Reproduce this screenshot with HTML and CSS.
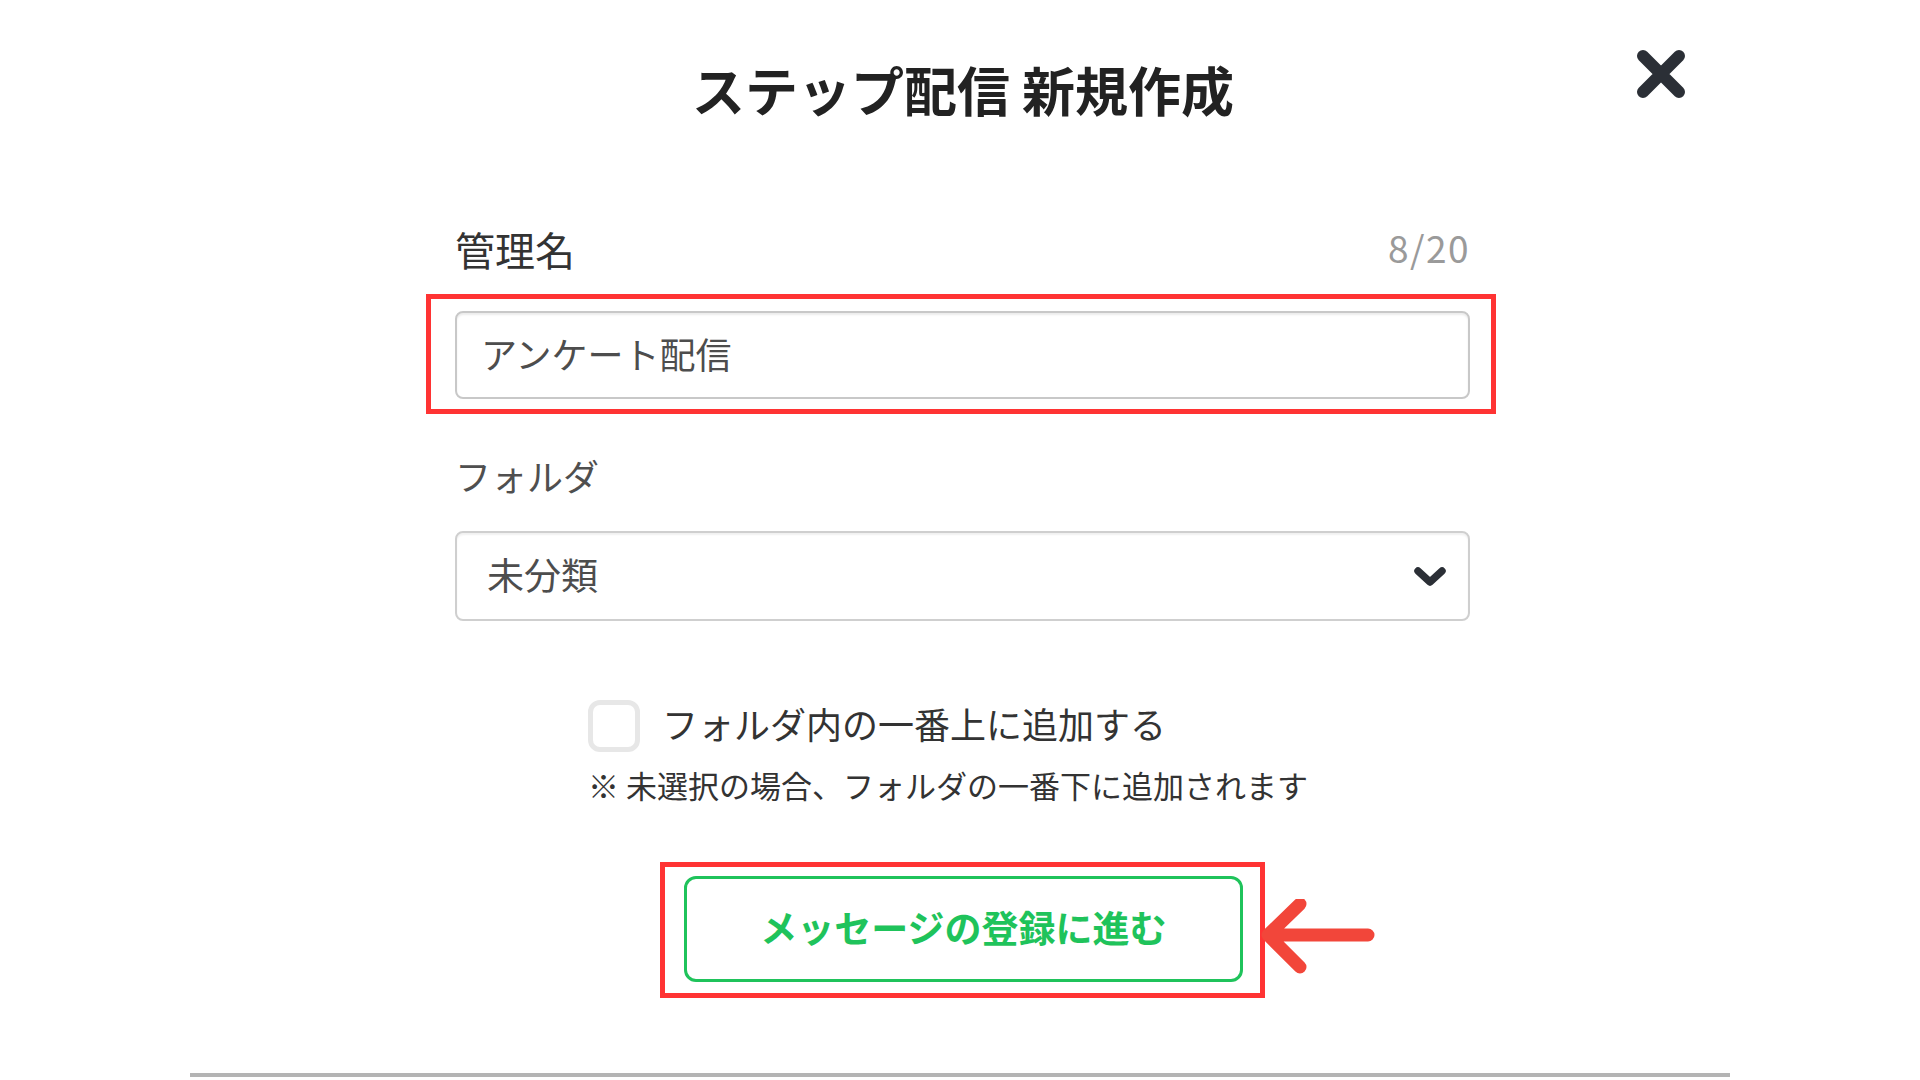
FILE: index.html
```html
<!DOCTYPE html>
<html lang="ja">
<head>
<meta charset="utf-8">
<title>ステップ配信 新規作成</title>
<link rel="stylesheet" href="styles.css">
</head>
<body>
<div class="frame">
  <header class="header">
    <div class="spacer"></div>
    <h1 class="title">ステップ配信 新規作成</h1>
    <button class="close" aria-label="閉じる">
      <svg width="50" height="50" viewBox="0 0 50 50"><path d="M7 7 L43 43 M43 7 L7 43" stroke="#2b2f36" stroke-width="12" stroke-linecap="round" fill="none"/></svg>
    </button>
  </header>

  <main class="form">
    <div class="label-row">
      <span class="label label-main">管理名</span>
      <span class="counter">8/20</span>
    </div>
    <div class="mark mark-input">
      <input class="text-input" type="text" value="アンケート配信">
    </div>

    <div class="label-row label-row-folder">
      <span class="label label-sub">フォルダ</span>
    </div>
    <div class="select">
      <span class="select-value">未分類</span>
      <svg class="chevron" width="34" height="20" viewBox="0 0 34 20"><path d="M5 4 L17 15 L29 4" stroke="#2b2f36" stroke-width="7.5" stroke-linecap="round" stroke-linejoin="round" fill="none"/></svg>
    </div>

    <div class="check-group">
      <label class="check-row">
        <span class="checkbox"></span>
        <span class="check-text">フォルダ内の一番上に追加する</span>
      </label>
      <p class="note">※ 未選択の場合、フォルダの一番下に追加されます</p>
    </div>

    <div class="mark mark-button">
      <button class="next-btn">メッセージの登録に進む</button>
      <svg class="arrow" width="116" height="80" viewBox="0 0 116 80"><path d="M108 36 L8 36 M8 36 L40 5 M8 36 L40 68" stroke="#f2463a" stroke-width="13" stroke-linecap="round" stroke-linejoin="round" fill="none"/></svg>
    </div>
  </main>
</div>
</body>
</html>
```

FILE: styles.css
```css
* { box-sizing: border-box; }
html, body {
  margin: 0;
  padding: 0;
  background: #ffffff;
  overflow: hidden;
}
body {
  font-family: "Noto Sans CJK JP", "Noto Sans", sans-serif;
  color: #333333;
}
.frame {
  width: 1540px;
  height: 1077px;
  margin-left: 190px;
  border-bottom: 4px solid #b4b4b4;
  position: relative;
}
.header {
  display: grid;
  grid-template-columns: 1fr auto 1fr;
  align-items: start;
  padding-top: 49px;
}
.title {
  margin: 10px 0 0 0;
  font-size: 53px;
  line-height: 60px;
  font-weight: 700;
  color: #222222;
  letter-spacing: 0;
  transform: translateX(3px);
}
.close {
  justify-self: end;
  margin-right: 44px;
  padding: 0;
  border: 0;
  background: none;
  width: 50px;
  height: 50px;
  display: block;
}
.close svg { display: block; }

.form {
  width: 1015px;
  margin-left: 265px;
  display: flex;
  flex-direction: column;
}
.label-row {
  display: flex;
  justify-content: space-between;
  align-items: flex-start;
  margin-top: 102px;
}
.label {
  color: #333333;
}
.label-main {
  font-size: 40px;
  line-height: 56px;
}
.counter {
  font-size: 37px;
  line-height: 52px;
  color: #9a9a9a;
  letter-spacing: 1.5px;
}
.mark {
  border: 5px solid #ff3333;
}
.mark-input {
  margin: 17px -26px 0 -29px;
  padding: 12px 21px 10px 24px;
}
.text-input {
  display: block;
  width: 100%;
  height: 88px;
  border: 2px solid #c8c8c8;
  border-radius: 8px;
  box-shadow: inset 0 2px 2px rgba(0,0,0,0.08);
  padding: 0 24px 4px 24px;
  font-family: "Noto Sans CJK JP", sans-serif;
  font-size: 36px;
  color: #4d4d4d;
  background: #ffffff;
  outline: none;
}
.label-row-folder {
  margin-top: 36px;
}
.label-sub {
  font-size: 36px;
  line-height: 50px;
  color: #4f4f4f;
}
.select {
  margin-top: 31px;
  height: 90px;
  border: 2px solid #cfcfcf;
  border-radius: 8px;
  box-shadow: inset 0 2px 2px rgba(0,0,0,0.06);
  display: flex;
  align-items: center;
  justify-content: space-between;
  padding: 0 21px 0 30px;
}
.select-value {
  font-size: 37px;
  color: #4d4d4d;
  padding-bottom: 4px;
}
.chevron { display: block; margin-top: 2px; }

.check-group {
  margin-top: 79px;
  padding-left: 133px;
}
.check-row {
  display: flex;
  align-items: center;
  gap: 22px;
  height: 52px;
}
.checkbox {
  width: 52px;
  height: 52px;
  border: 5px solid #e7e7e7;
  border-radius: 12px;
  background: #ffffff;
  flex: none;
}
.check-text {
  font-size: 36px;
  line-height: 52px;
  margin-top: -6px;
  color: #333333;
}
.note {
  margin: 13px 0 0 0;
  font-size: 31px;
  line-height: 40px;
  color: #333333;
}
.mark-button {
  position: relative;
  align-self: center;
  margin-top: 57px;
  padding: 9px 17px 11px 19px;
}
.next-btn {
  display: block;
  width: 559px;
  height: 106px;
  border: 3px solid #1fc35b;
  border-radius: 12px;
  background: #ffffff;
  color: #1fc35b;
  font-family: "Noto Sans CJK JP", sans-serif;
  font-size: 37px;
  font-weight: 700;
  padding: 0 0 4px 0;
}
.arrow {
  position: absolute;
  left: 100%;
  top: 32px;
  margin-left: 0px;
}
```
